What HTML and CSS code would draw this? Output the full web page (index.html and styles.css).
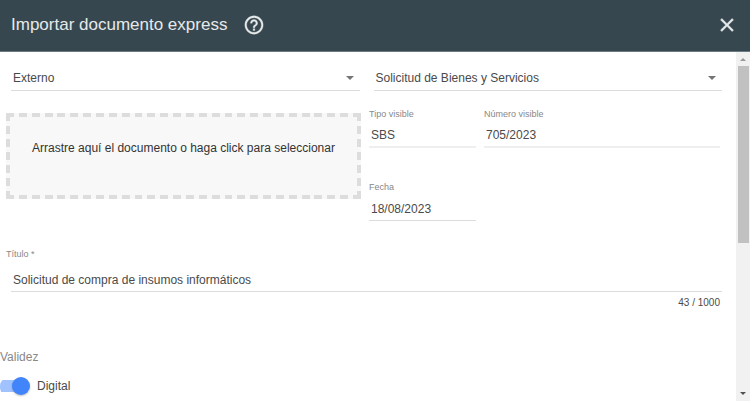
FILE: index.html
```html
<!DOCTYPE html>
<html lang="es">
<head>
<meta charset="utf-8">
<title>Importar documento express</title>
<link rel="stylesheet" href="styles.css">
</head>
<body>
<div class="dialog">
  <header class="toolbar">
    <h1 class="toolbar-title">Importar documento express</h1>
    <button class="icon-button" type="button" aria-label="Ayuda">
      <svg class="icon-help" viewBox="0 0 24 24"><path d="M11 18h2v-2h-2v2zm1-16C6.480 2 2 6.480 2 12s4.480 10 10 10 10-4.480 10-10S17.520 2 12 2zm0 18c-4.410 0-8-3.590-8-8s3.590-8 8-8 8 3.590 8 8-3.590 8-8 8zm0-14c-2.210 0-4 1.790-4 4h2c0-1.100.9-2 2-2s2 .9 2 2c0 2-3 1.750-3 5h2c0-2.250 3-2.500 3-5 0-2.210-1.790-4-4-4z"/></svg>
    </button>
    <button class="icon-button close" type="button" aria-label="Cerrar">
      <svg class="icon-close" viewBox="0 0 24 24"><path d="M19 6.410L17.590 5 12 10.590 6.410 5 5 6.410 10.590 12 5 17.590 6.410 19 12 13.410 17.590 19 19 17.590 13.410 12z"/></svg>
    </button>
  </header>
  <div class="body">
    <form class="form">
      <div class="columns selects">
        <div class="select-field">
          <select aria-label="Origen"><option>Externo</option></select>
          <svg class="arrow" viewBox="0 0 8 4"><path d="M0 0h8L4 4z"/></svg>
        </div>
        <div class="select-field">
          <select aria-label="Tipo de documento"><option>Solicitud de Bienes y Servicios</option></select>
          <svg class="arrow" viewBox="0 0 8 4"><path d="M0 0h8L4 4z"/></svg>
        </div>
      </div>
      <div class="columns details">
        <button class="dropzone" type="button">Arrastre aquí el documento o haga click para seleccionar</button>
        <div class="data">
          <div class="field disabled">
            <label for="tipo">Tipo visible</label>
            <input id="tipo" type="text" value="SBS">
          </div>
          <div class="field disabled">
            <label for="numero">Número visible</label>
            <input id="numero" type="text" value="705/2023">
          </div>
          <div class="field">
            <label for="fecha">Fecha</label>
            <input id="fecha" type="text" value="18/08/2023">
          </div>
        </div>
      </div>
      <div class="title-field">
        <label for="titulo">Título *</label>
        <input id="titulo" type="text" value="Solicitud de compra de insumos informáticos">
        <span class="counter">43 / 1000</span>
      </div>
      <fieldset class="validity">
        <legend>Validez</legend>
        <label class="switch"><input type="checkbox" role="switch" checked><span>Digital</span></label>
      </fieldset>
    </form>
    <div class="scrollbar" aria-hidden="true">
      <svg class="scroll-up" viewBox="0 0 6 3"><path d="M0 3h6L3 0z"/></svg>
      <div class="scroll-track"><div class="scroll-thumb"></div></div>
      <svg class="scroll-down" viewBox="0 0 6 3"><path d="M0 0h6L3 3z"/></svg>
    </div>
  </div>
</div>
</body>
</html>
```
FILE: styles.css
```css
* { box-sizing: border-box; }

body {
  margin: 0;
  background: #fff;
  color: #4a4a4a;
  font: 12px/16px "Liberation Sans", Arial, sans-serif;
}

.dialog {
  display: flex;
  flex-direction: column;
  height: 100vh;
  padding: 0 2px 2px 0;
  overflow: hidden;
}

.toolbar {
  display: flex;
  flex: none;
  align-items: center;
  padding: 13px 12px 14px 11px;
  border-bottom: 1px solid #6b7b82;
  background: #37474f;
  color: #e6e9ea;
}

.toolbar-title {
  margin: 0 16px 0 0;
  font-size: 17px;
  font-weight: 400;
  line-height: 24px;
}

.icon-button {
  display: flex;
  padding: 0;
  border: 0;
  background: none;
  color: inherit;
}

.icon-button svg {
  width: 22px;
  height: 22px;
  fill: currentColor;
  stroke: currentColor;
}

.close { margin-left: auto; }
.icon-help { stroke-width: 0.3; }
.icon-close { stroke-width: 0.6; }

.body {
  display: flex;
  flex: 1;
  min-height: 0;
}

.form {
  flex: 1;
  min-width: 0;
  overflow: hidden;
}

.columns {
  display: grid;
  grid-template-columns: 1fr 1fr;
}

.selects {
  gap: 14px;
  padding: 14px 14px 0 11px;
}

.select-field {
  display: grid;
  align-items: center;
  border-bottom: 1px solid #dcdcdc;
}

.select-field > * { grid-area: 1 / 1; }

select {
  width: 100%;
  height: 24px;
  padding: 0 24px 0 2px;
  border: 0;
  background: none;
  color: inherit;
  font: inherit;
  appearance: none;
}

.arrow {
  justify-self: end;
  width: 8px;
  height: 4px;
  margin-right: 6px;
  fill: #757575;
  pointer-events: none;
}

.details {
  grid-template-columns: 355fr 351fr;
  gap: 8px;
  align-items: start;
  padding: 17px 16px 0 6px;
}

.dropzone {
  height: 86px;
  margin-top: 5px;
  padding: 0 0 16px;
  border: 4px solid #ddd;
  border-image: url("data:image/svg+xml,%3Csvg xmlns='http://www.w3.org/2000/svg' width='21' height='21'%3E%3Cpath fill='%23ddd' d='M0 0h8v4H4v4H0zM13 0h8v8h-4V4h-4zM0 13h4v4h4v4H0zM17 13h4v8h-8v-4h4z'/%3E%3C/svg%3E") 4 round;
  background: #f8f8f8;
  color: #333;
  font: inherit;
}

.data {
  display: grid;
  grid-template-columns: 107px 1fr;
  gap: 33px 8px;
}

.field,
.title-field {
  display: flex;
  flex-direction: column;
}

.field label,
.title-field label {
  color: #888;
  font-size: 9px;
  line-height: 12px;
}

input[type="text"] {
  width: 100%;
  height: 24px;
  padding: 0 2px;
  border: 0;
  border-bottom: 1px solid #dcdcdc;
  background: none;
  color: inherit;
  font: inherit;
}

.field input { margin-top: 4px; }

.field.disabled input {
  border-bottom: 2px solid #efefef;
}

.title-field { padding: 27px 14px 0 11px; }
.title-field label { margin-left: -5px; }
.title-field input { margin-top: 8px; }

.counter {
  align-self: flex-end;
  margin: 5px 2px 0 0;
  font-size: 10px;
  line-height: 12px;
}

.validity {
  margin: 40px 0 0;
  padding: 0;
  border: 0;
}

.validity legend {
  padding: 0;
  color: #888;
}

.switch {
  display: flex;
  gap: 7px;
  align-items: center;
  margin-top: 12px;
}

.switch input {
  display: flex;
  align-items: center;
  justify-content: flex-end;
  width: 30px;
  height: 18px;
  margin: 0;
  border-radius: 6px 9px 9px 6px;
  background: linear-gradient(#a0c3ff, #a0c3ff) 0 3px / 24px 12px no-repeat;
  clip-path: inset(0 -2px -2px 0 round 9px);
  appearance: none;
}

.switch input::before {
  content: "";
  width: 18px;
  height: 18px;
  border-radius: 50%;
  background: #4285fa;
  box-shadow: 0 1px 2px rgb(0 0 0 / 25%);
}

.scrollbar {
  display: flex;
  flex: none;
  flex-direction: column;
  align-items: center;
  width: 14px;
  padding: 6px 0;
  background: #f1f1f1;
}

.scrollbar svg { width: 6px; height: 3px; }
.scroll-up { fill: #999; }
.scroll-down { fill: #505050; }

.scroll-track {
  flex: 1;
  width: 11px;
  padding: 5px 0;
}

.scroll-thumb {
  height: 55%;
  background: #c1c1c1;
}
```
